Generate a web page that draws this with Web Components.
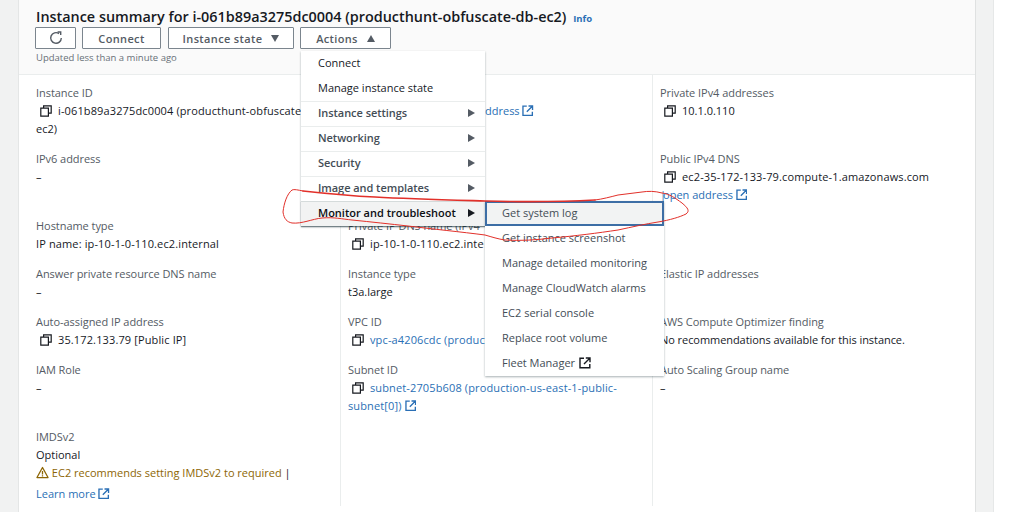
<!DOCTYPE html>
<html>
<head>
<meta charset="utf-8">
<title>Instance summary</title>
<style>
  html, body { margin: 0; height: 512px; overflow: hidden; background: #fff; }
  body { font-family: "Open Sans", "Noto Sans", sans-serif; font-size: 11px; color: #16191f; }
</style>
</head>
<body>
<instance-page>
  <summary-card>
    <summary-field label="Instance ID" copy><span class="wide">i-061b89a3275dc0004 (producthunt-obfuscate</span><br>ec2)</summary-field>
    <summary-field label=""><span class="link far">ddress <ext-icon></ext-icon></span></summary-field>
    <summary-field label="Private IPv4 addresses" copy>10.1.0.110</summary-field>

    <summary-field label="IPv6 address">–</summary-field>
    <summary-field label=""></summary-field>
    <summary-field label="Public IPv4 DNS" copy><span class="wide">ec2-35-172-133-79.compute-1.amazonaws.com</span><br><span class="link"><span style="letter-spacing:-3px">|</span>open address <ext-icon></ext-icon></span></summary-field>

    <summary-field label="Hostname type"><span class="wide">IP name: ip-10-1-0-110.ec2.internal</span></summary-field>
    <summary-field label="Private IP DNS name (IPv4" copy><span class="wide">ip-10-1-0-110.ec2.inte</span></summary-field>
    <summary-field label=""></summary-field>

    <summary-field label="Answer private resource DNS name">–</summary-field>
    <summary-field label="Instance type">t3a.large</summary-field>
    <summary-field label="Elastic IP addresses"></summary-field>

    <summary-field label="Auto-assigned IP address" copy><span class="wide">35.172.133.79 [Public IP]</span></summary-field>
    <summary-field label="VPC ID" copy><span class="link wide">vpc-a4206cdc (produc</span></summary-field>
    <summary-field label="AWS Compute Optimizer finding"><span style="letter-spacing:-.06px">No recommendations available for this instance.</span></summary-field>

    <summary-field label="IAM Role">–</summary-field>
    <summary-field label="Subnet ID" copy><span class="link wide">subnet-2705b608 (production-us-east-1-public-<br>subnet[0]) <ext-icon></ext-icon></span></summary-field>
    <summary-field label="Auto Scaling Group name">–</summary-field>

    <summary-field label="IMDSv2">Optional<br><span class="warn"><svg width="13" height="13" viewBox="0 0 16 16" fill="none" stroke="#8d6605" stroke-width="1.6" style="vertical-align:-2px"><path d="M8 1.8 1.2 14.2h13.6z" stroke-linejoin="round"/><path d="M8 6v4.4M8 11.4v1.4"/></svg> EC2 recommends setting IMDSv2 to required</span> |<br><span class="link learn">Learn more <ext-icon></ext-icon></span></summary-field>
    <summary-field label=""></summary-field>
    <summary-field label=""></summary-field>
  </summary-card>
  <actions-menu></actions-menu>
  <red-scribble></red-scribble>
</instance-page>

<script>
// little external link icon, used in links and the Fleet Manager item
class ExtIcon extends HTMLElement {
  constructor() {
    super();
    this.attachShadow({mode: 'open'}).innerHTML = `
      <style>:host { display: inline-block; width: 11.5px; height: 12px; vertical-align: -2px; letter-spacing: 0; }
      svg { display: block; }</style>
      <svg width="11.5" height="11.5" viewBox="0 0 12 12" fill="none" stroke="currentColor" stroke-width="1.4">
        <path d="M5 1.2H1v9.6h9.8V7M6.8 1H11v4.2M11 1 5 7"/>
      </svg>`;
  }
}
customElements.define('ext-icon', ExtIcon);

class InstancePage extends HTMLElement {
  constructor() {
    super();
    this.attachShadow({mode: 'open'}).innerHTML = `
      <style>
        :host { display: grid; grid-template-columns: 19px 956px 19px 1fr; position: relative; width: 1024px; height: 512px; overflow: hidden; background: #fff; }
        .rail { background: #f1f2f2; }
        .rail.r { border-left: 1px solid #dfe1e1; border-right: 1px solid #e6e8e8; }
        .rail.l { border-right: 1px solid #e4e6e6; }
      </style>
      <div class="rail l"></div>
      <slot></slot>
      <div class="rail r"></div>`;
  }
}
customElements.define('instance-page', InstancePage);

class SummaryCard extends HTMLElement {
  constructor() {
    super();
    this.attachShadow({mode: 'open'}).innerHTML = `
      <style>
        :host { display: block; box-sizing: border-box; height: 512px; background: #fff; }
        header { box-sizing: border-box; height: 75px; background: #fafafa; border-bottom: 1px solid #eaeded;
          padding: 8px 0 0 17px; }
        h1 { margin: 0; font-size: 14.4px; line-height: 18px; font-weight: 600; color: #16191f; white-space: nowrap; }
        h1 a { font-size: 9.5px; font-weight: 700; color: #2a6fb5; margin-left: 3px; }
        .buttons { display: flex; gap: 6px; margin: -1px 0 0 -1px; }
        .btn { box-sizing: border-box; height: 22px; border: 1px solid #7b858e; border-radius: 1px; background: #fff;
          display: flex; align-items: center; justify-content: center; gap: 9px;
          font-size: 11px; font-weight: 600; letter-spacing: .35px; color: #545b64; }
        .tri { width: 0; height: 0; border-left: 4.5px solid transparent; border-right: 4.5px solid transparent; }
        .down { border-top: 7px solid #545b64; }
        .up { border-bottom: 7px solid #545b64; }
        small { display: block; font-size: 9.5px; line-height: 14px; margin-top: 2px; color: #687078; }
        main { display: grid; grid-template-columns: 304px 312px 1fr; padding: 0 0 0 17px; align-content: start; }
      </style>
      <header>
        <h1>Instance summary for i-061b89a3275dc0004 (producthunt-obfuscate-db-ec2) <a>Info</a></h1>
        <div class="buttons">
          <div class="btn" style="width:41px">
            <svg width="14" height="14" viewBox="0 0 14 14" fill="none" stroke="#545b64" stroke-width="1.4"><path d="M12.3 7A5.3 5.3 0 1 1 10 2.6"/><path d="M8.6 1h3.1v3.1"/></svg>
          </div>
          <div class="btn" style="width:79px;margin-right:1px">Connect</div>
          <div class="btn" style="width:126px">Instance state <span class="tri down"></span></div>
          <div class="btn" style="width:91px">Actions <span class="tri up"></span></div>
        </div>
        <small>Updated less than a minute ago</small>
      </header>
      <main><slot></slot></main>`;
  }
}
customElements.define('summary-card', SummaryCard);

class SummaryField extends HTMLElement {
  constructor() {
    super();
    const hasCopy = this.hasAttribute('copy');
    const root = this.attachShadow({mode: 'open'});
    root.innerHTML = `
      <style>
        :host { display: block; box-sizing: border-box; padding: 9px 0 3.3px 0; line-height: 18px; min-width: 0; white-space: nowrap; }
        :host(:nth-child(3n+2)), :host(:nth-child(3n)) { border-left: 1px solid #eaeded; padding-left: 7px; }
        .label { color: #545b64; height: 18px; letter-spacing: -.05px; }
        .value { color: #16191f; }
        .copy { vertical-align: -2px; margin: -3px 6px 0 4px; }
        ::slotted(.link) { color: #2a6fb5; }
        ::slotted(.wide) { letter-spacing: .13px; }
        ::slotted(.warn) { color: #8d6605; }
        ::slotted(.far) { margin-left: 137px; }
        ::slotted(.learn) { display: inline-block; margin-top: 3px; }
      </style>
      <div class="label"></div>
      <div class="value">${hasCopy ? '<svg class="copy" width="12" height="12" viewBox="0 0 12 12" fill="none" stroke="#16191f" stroke-width="1.2"><path d="M3.6 3V.8h7.6v7.4H8.6"/><path d="M.8 3.2h7.6v8H.8z"/></svg>' : ''}<slot></slot></div>`;
    root.querySelector('.label').textContent = this.getAttribute('label');
  }
}
customElements.define('summary-field', SummaryField);

class ActionsMenu extends HTMLElement {
  constructor() {
    super();
    const item = (text, cls = '', arrow = false) =>
      `<li class="${cls}">${text}${arrow ? '<i></i>' : ''}</li>`;
    this.attachShadow({mode: 'open'}).innerHTML = `
      <style>
        :host { position: absolute; left: 301px; top: 51px; display: block; width: 363px; height: 325px; }
        ul { margin: 0; padding: 0; list-style: none; position: absolute; background: #fff;
          box-shadow: 0 1px 2px rgba(0,28,36,.35); }
        li { box-sizing: border-box; height: 25px; padding-bottom: 2px; display: flex; align-items: center; font-size: 11px; color: #16191f; white-space: nowrap; }
        .main { left: 0; top: 0; width: 184px; }
        .main li { padding-left: 17px; padding-right: 10px; justify-content: space-between; }
        .main li.sep { border-top: 1px solid #eaeded; padding-bottom: 3px; font-weight: 600; color: #444d56; letter-spacing: -.05px; }
        .main li.open { background: #f2f3f3; color: #0c0e12; letter-spacing: 0; box-shadow: 0 1px 1px rgba(0,28,36,.4); border-top-color: #d5dbdb; }
        i { width: 0; height: 0; border-top: 4.5px solid transparent; border-bottom: 4.5px solid transparent; border-left: 7px solid #545b64; }
        .open i { border-left-color: #16191f; }
        .sub { left: 184px; top: 150px; width: 179px; }
        .sub li { padding-left: 17px; color: #444d56; }
        .sub li.on { background: #f2f3f3; outline: 2px solid #3d6ea5; outline-offset: -2px; }
        svg { margin-left: 4px; }
      </style>
      <ul class="main">
        ${item('Connect')}
        ${item('Manage instance state')}
        ${item('Instance settings', 'sep', true)}
        ${item('Networking', 'sep', true)}
        ${item('Security', 'sep', true)}
        ${item('Image and templates', 'sep', true)}
        ${item('Monitor and troubleshoot', 'sep open', true)}
      </ul>
      <ul class="sub">
        ${item('Get system log', 'on')}
        ${item('Get instance screenshot')}
        ${item('Manage detailed monitoring')}
        ${item('Manage CloudWatch alarms')}
        ${item('EC2 serial console')}
        ${item('Replace root volume')}
        <li>Fleet Manager <svg width="12" height="12" viewBox="0 0 12 12" fill="none" stroke="#16191f" stroke-width="1.4"><path d="M5 1.2H1v9.6h9.8V7M6.8 1H11v4.2M11 1 5 7"/></svg></li>
      </ul>`;
  }
}
customElements.define('actions-menu', ActionsMenu);

// the hand drawn red loop around the menu item
class RedScribble extends HTMLElement {
  constructor() {
    super();
    this.attachShadow({mode: 'open'}).innerHTML = `
      <style>:host { position: absolute; left: 0; top: 0; display: block; width: 1024px; height: 512px; pointer-events: none; }</style>
      <svg width="1024" height="512" fill="none" stroke="#e2302a" stroke-width="1" stroke-linecap="round">
        <path d="M303 191C298 190 294 189 292 190C287 194 284 203 283 212C284 219 287 222 292 223C302 224 312 219 322 218C334 217 342 219 352 220C372 222 390 224 408 226C432 229 462 232 485 235C492 237 498 239 505 240C520 241 536 240 552 238C575 236 598 233 618 230C632 227 645 224 658 222C670 220 680 217 686 214C690 211 688 208 682 203C675 198 670 194 662 193C655 191 648 191 642 192C634 193 626 194 618 195C610 197 603 199 595 200"/>
        <path stroke-width="1.7" d="M303 191C330 194 352 196 375 197C410 199 450 200 485 201C520 202 560 202 595 200"/>
      </svg>`;
  }
}
customElements.define('red-scribble', RedScribble);
</script>
</body>
</html>
